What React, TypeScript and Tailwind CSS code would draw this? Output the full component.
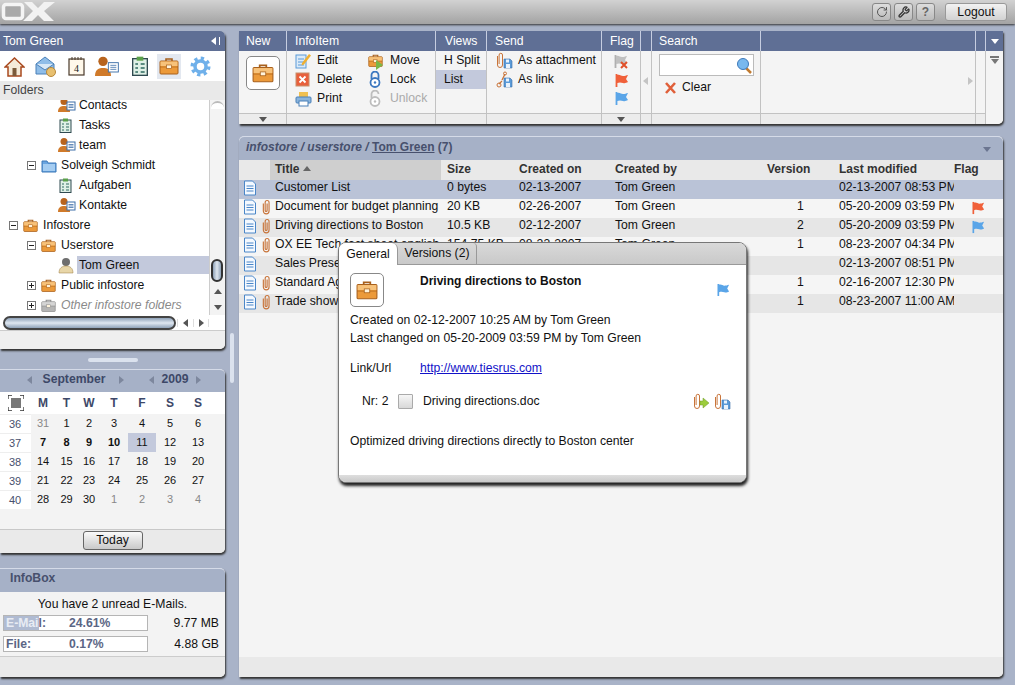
import type { ReactNode } from 'react';
import { RotateCw, Wrench } from 'lucide-react';

const Briefcase = ({ size = 16, grey = false }: { size?: number; grey?: boolean }) => {
  const dark = grey ? '#8f8f8f' : '#a8601c';
  const main = grey ? '#b5b5b5' : '#ec9a3a';
  const light = grey ? '#d5d5d5' : '#f7c27a';
  return (
    <svg width={size} height={size} viewBox="0 0 20 20" className="shrink-0">
      <path d="M7 5V3h6v2" fill="none" stroke={dark} strokeWidth="1.6" />
      <rect x="1" y="5" width="18" height="13" rx="1" fill={main} stroke={dark} />
      <rect x="1.5" y="5.5" width="17" height="4.5" fill={light} />
      <rect x="1" y="10.5" width="18" height="1" fill={dark} opacity=".6" />
      <rect x="7.5" y="9" width="5" height="3.5" fill="#fff4dd" stroke={dark} strokeWidth=".7" />
    </svg>
  );
};

const Contact = () => (
  <svg width="18" height="16" viewBox="0 0 18 16" className="shrink-0">
    <circle cx="6" cy="4.5" r="3.5" fill="#b8641e" />
    <path d="M0 15c0-5 3-6 6-6s6 1 6 6z" fill="#d07a2a" />
    <rect x="9" y="5" width="8" height="8" fill="#fff" stroke="#3d6fa8" />
    <path d="M10.5 7.5h5M10.5 9h5M10.5 10.5h5" stroke="#3d6fa8" strokeWidth=".8" />
  </svg>
);

const TaskIcon = ({ size = 15 }: { size?: number }) => (
  <svg width={size} height={size} viewBox="0 0 15 15" className="shrink-0">
    <rect x="2" y="2" width="11" height="12.5" fill="#dff0e6" stroke="#2f4a50" />
    <rect x="5" y="0.5" width="5" height="3" fill="#5aa04a" />
    <path d="M4 6h2M4 9h2M4 12h2M8 6h3M8 9h3M8 12h3" stroke="#2f6a60" />
  </svg>
);

const Folder = () => (
  <svg width="16" height="15" viewBox="0 0 16 15" className="shrink-0">
    <path d="M1 3h5l1 2h8v9H1z" fill="#6aa5e0" stroke="#3d78b8" />
    <rect x="2" y="6" width="12" height="7" fill="#a5cdf2" />
  </svg>
);

const Doc = () => (
  <svg width="14" height="16" viewBox="0 0 14 16" className="shrink-0">
    <path d="M1.5 1h8l3 3v11h-11z" fill="#f4f9ff" stroke="#4a86c8" />
    <path d="M3.5 6h7M3.5 8.500h7M3.500 11h7" stroke="#4a86c8" />
  </svg>
);

const Clip = ({ size = 16 }: { size?: number }) => (
  <svg width={size * 0.65} height={size} viewBox="0 0 9 14" className="shrink-0">
    <path
      d="M2 4v6.500a2.500 2.500 0 0 0 5 0V3a1.700 1.700 0 0 0-3.400 0v7a.8.8 0 0 0 1.700 0V4"
      fill="none"
      stroke="#c8743a"
      strokeWidth="1"
    />
  </svg>
);

const Flag = ({ color, size = 15 }: { color: string; size?: number }) => (
  <svg width={size} height={size} viewBox="0 0 15 15" className="shrink-0">
    <path d="M2.500 1v13" stroke={color} strokeWidth="1.800" />
    <path d="M3 2c3-1 4 1 6 1s3-.5 5-1l-2 4 2 3c-2 1-3 1.500-5 1s-3-1-6 0z" fill={color} />
  </svg>
);

const FlagX = () => (
  <svg width="16" height="15" viewBox="0 0 16 15" className="shrink-0">
    <path d="M2.500 1v13" stroke="#b0b0b0" strokeWidth="1.800" />
    <path d="M3 2c3-1 4 1 6 1s3-.5 5-1l-2 4 2 3c-2 1-3 1.500-5 1s-3-1-6 0z" fill="#c0c0c0" />
    <path d="M8 8l6 6M14 8l-6 6" stroke="#e0502a" strokeWidth="2" />
  </svg>
);

const ClipSave = ({ link = false }: { link?: boolean }) => (
  <svg width="17" height="17" viewBox="0 0 17 17" className="shrink-0">
    {link ? (
      <>
        <path d="M3 13l3-3M6 9l3-6" stroke="#c8743a" strokeWidth="1.300" />
        <circle cx="3" cy="14" r="2" fill="none" stroke="#c8743a" />
        <circle cx="9" cy="2.500" r="1.500" fill="none" stroke="#c8743a" />
      </>
    ) : (
      <path d="M1.500 4v9a2.500 2.500 0 0 0 5 0V3a1.700 1.700 0 0 0-3.400 0v9" fill="none" stroke="#c8743a" />
    )}
    <path d="M8 7h6l2 2v7H8z" fill="#5a9ad8" stroke="#3d6fa8" strokeWidth=".6" />
    <rect x="10" y="7.500" width="3" height="3" fill="#e8f2fc" />
    <rect x="10" y="12" width="4" height="4" fill="#e8f2fc" />
  </svg>
);

const ClipMove = () => (
  <svg width="17" height="17" viewBox="0 0 17 17" className="shrink-0">
    <path d="M1.500 4v9a2.500 2.500 0 0 0 5 0V3a1.700 1.700 0 0 0-3.400 0v9" fill="none" stroke="#c8743a" />
    <path d="M10 5v3H7v4h3v3l6-5z" fill="#9ccc3c" stroke="#6f9a2a" strokeWidth=".5" />
  </svg>
);

const Lock = ({ open = false }: { open?: boolean }) => {
  const c = open ? '#bdbdbd' : '#3d78c0';
  return (
    <svg width="14" height="17" viewBox="0 0 14 17" className="shrink-0">
      <path d={open ? 'M3.500 8V4a3.500 3.500 0 0 1 7 0' : 'M3.500 8V4a3.500 3.500 0 0 1 7 0v4'} fill="none" stroke={c} strokeWidth="1.800" />
      <circle cx="7" cy="11.500" r="4.500" fill="#fff" stroke={c} strokeWidth="1.800" />
      <circle cx="7" cy="11.500" r="1.200" fill={c} />
    </svg>
  );
};

const Caret = ({ dir, color }: { dir: 'l' | 'r' | 'd' | 'u'; color: string }) => {
  const d = { l: 'M6 0v8L1 4z', r: 'M2 0v8l5-4z', d: 'M0 2h8L4 7z', u: 'M0 6h8L4 1z' }[dir];
  return (
    <svg width="8" height="8" viewBox="0 0 8 8" className="shrink-0">
      <path d={d} fill={color} />
    </svg>
  );
};

const OxLogo = () => (
  <svg width="58" height="22" viewBox="0 0 58 22">
    <rect x="3.500" y="3.500" width="19" height="14" rx="2.500" fill="#a9a9a9" stroke="#f4f4f4" strokeWidth="3.500" />
    <path d="M24 1h8l6 6 6-6h11l-11 9 10 10H44l-6-6-6 6H23l10-10z" fill="#f2f2f2" />
  </svg>
);

const ModuleIcons = () => (
  <div className="flex h-[30px] items-center bg-white pl-[4px]">
    <div className="flex w-[31px] justify-start">
      <svg width="21" height="21" viewBox="0 0 21 21">
        <path d="M10.500 2L1 11h3v9h13v-9h3z" fill="#f4ead8" stroke="#a8481e" strokeWidth="1.500" />
        <rect x="8.500" y="12" width="4" height="8" fill="#7a5a3a" />
      </svg>
    </div>
    <div className="flex w-[33px] justify-start">
      <svg width="22" height="21" viewBox="0 0 22 21">
        <path d="M1 8l9-7 9 7v10H1z" fill="#8fbde8" stroke="#4a80b8" />
        <path d="M1 8l9 6 9-6" fill="#d8e8f6" stroke="#4a80b8" />
        <circle cx="16" cy="16" r="4.500" fill="#e8c070" stroke="#b8883a" />
      </svg>
    </div>
    <div className="flex w-[27px] justify-start">
      <svg width="17" height="20" viewBox="0 0 17 20">
        <rect x="1" y="3" width="15" height="16" fill="#fff8ea" stroke="#4a3a2a" strokeWidth="1.200" />
        <path d="M4 1v3M7 1v3M10 1v3M13 1v3" stroke="#4a3a2a" />
        <text x="8.500" y="15.500" fontSize="10" textAnchor="middle" fill="#222" fontFamily="Liberation Serif">4</text>
      </svg>
    </div>
    <div className="flex w-[35px] justify-start">
      <svg width="24" height="20" viewBox="0 0 18 15">
        <circle cx="6" cy="4" r="3.500" fill="#b8641e" />
        <path d="M0 15c0-5 3-6 6-6s6 1 6 6z" fill="#d07a2a" />
        <rect x="10" y="5" width="7.500" height="7" fill="#fff" stroke="#3d6fa8" strokeWidth=".7" />
        <path d="M11.500 7h4.500M11.500 8.500h4.500M11.500 10h4.500" stroke="#3d6fa8" strokeWidth=".6" />
      </svg>
    </div>
    <div className="flex w-[27px] justify-start">
      <TaskIcon size={20} />
    </div>
    <div className="flex h-[25px] w-[24px] items-center justify-center bg-[#e3e8f0]">
      <Briefcase size={20} />
    </div>
    <div className="ml-[9px]">
      <svg width="21" height="21" viewBox="0 0 21 21">
        <circle cx="10.500" cy="10.500" r="8" fill="none" stroke="#6fb0ea" strokeWidth="4" strokeDasharray="3.140 3.140" />
        <circle cx="10.500" cy="10.500" r="5.500" fill="none" stroke="#6fb0ea" strokeWidth="3.500" />
      </svg>
    </div>
  </div>
);

type TreeRow = { label: string; depth: number; toggle?: '+' | '-'; icon: ReactNode; selected?: boolean; muted?: boolean };

const tree: TreeRow[] = [
  { label: 'Contacts', depth: 2, icon: <Contact /> },
  { label: 'Tasks', depth: 2, icon: <TaskIcon /> },
  { label: 'team', depth: 2, icon: <Contact /> },
  { label: 'Solveigh Schmidt', depth: 1, toggle: '-', icon: <Folder /> },
  { label: 'Aufgaben', depth: 2, icon: <TaskIcon /> },
  { label: 'Kontakte', depth: 2, icon: <Contact /> },
  { label: 'Infostore', depth: 0, toggle: '-', icon: <Briefcase size={15} /> },
  { label: 'Userstore', depth: 1, toggle: '-', icon: <Briefcase size={15} /> },
  {
    label: 'Tom Green',
    depth: 2,
    selected: true,
    icon: (
      <svg width="16" height="17" viewBox="0 0 16 17" className="shrink-0">
        <circle cx="8" cy="5" r="4" fill="#6e6e6e" />
        <path d="M1 16c0-5 3-7 7-7s7 2 7 7z" fill="#e8d6a8" stroke="#9a7a40" strokeWidth=".5" />
      </svg>
    ),
  },
  { label: 'Public infostore', depth: 1, toggle: '+', icon: <Briefcase size={15} /> },
  { label: 'Other infostore folders', depth: 1, toggle: '+', muted: true, icon: <Briefcase size={15} grey /> },
];

const Toggle = ({ sign }: { sign: '+' | '-' }) => (
  <div className="relative h-[9px] w-[9px] shrink-0 border border-[#777] bg-white">
    <div className="absolute left-[1px] top-[3px] h-[1px] w-[5px] bg-[#222]" />
    {sign === '+' && <div className="absolute left-[3px] top-[1px] h-[5px] w-[1px] bg-[#222]" />}
  </div>
);

const FolderTree = () => (
  <div className="-mt-[5px]">
    {tree.map((r) => {
      const pad = ['pl-[9px]', 'pl-[27px]', 'pl-[58px]'][r.depth];
      return (
        <div key={r.label} className={`flex h-[20px] items-center ${pad}`}>
          {r.toggle && (
            <div className="w-[14px]">
              <Toggle sign={r.toggle} />
            </div>
          )}
          <div className={`flex items-center justify-start ${r.depth === 2 ? 'w-[18px]' : 'w-[20px]'}`}>{r.icon}</div>
          <div
            className={`flex h-[18px] flex-1 items-center whitespace-nowrap text-[12.2px] ${r.selected ? 'ml-[1px] bg-[#c3c9dc] pl-[2px]' : ''} ${
              r.depth === 2 && !r.selected ? 'pl-[3px]' : ''
            } ${r.muted ? 'italic text-[#8a8a8a]' : 'text-[#111]'}`}
          >
            {r.label}
          </div>
        </div>
      );
    })}
  </div>
);

const FoldersPanel = () => (
  <div className="flex h-[318px] flex-col overflow-hidden rounded-r-[5px] bg-[#efefef] shadow-[1px_2px_2px_#333]">
    <div className="flex h-[20px] items-center justify-between bg-[#5f6f95] pl-[3px] pr-[5px] text-[12.2px] text-white">
      <span>Tom Green</span>
      <div className="flex items-center gap-[1px]">
        <Caret dir="l" color="#fff" />
        <div className="h-[8px] w-[1px] bg-white" />
      </div>
    </div>
    <ModuleIcons />
    <div className="flex h-[19px] items-center bg-[#e9e9e9] pl-[3px] text-[12.2px] text-[#444]">Folders</div>
    <div className="flex h-[215px] overflow-hidden bg-white">
      <div className="w-[209px] shrink-0 overflow-hidden">
        <FolderTree />
      </div>
      <div className="relative flex-1 border-l border-[#ccc] bg-[#f3f3f3]">
        <div className="mx-[1px] mt-[1px] h-[8px] rounded-t-[8px] border-t-2 border-[#bbb] bg-white" />
        <div className="absolute left-[1px] top-[159px] h-[23px] w-[12px] rounded-[6px] border-2 border-[#333] bg-gradient-to-r from-[#8fa2b8] via-[#dfe7f0] to-[#8fa2b8]" />
        <div className="absolute left-0 top-[184px] flex h-[31px] w-full flex-col items-center justify-around">
          <Caret dir="u" color="#555" />
          <Caret dir="d" color="#555" />
        </div>
      </div>
    </div>
    <div className="flex h-[16px] items-center border-b border-[#ccc] bg-white">
      <div className="ml-[3px] h-[14px] w-[173px] rounded-[7px] border-2 border-[#444] bg-gradient-to-b from-[#8fa2b8] via-[#dfe7f0] to-[#8fa2b8]" />
      <div className="ml-[1px] flex w-[16px] justify-center border-l border-[#ddd]">
        <Caret dir="l" color="#555" />
      </div>
      <div className="flex w-[16px] justify-center border-x border-[#ddd]">
        <Caret dir="r" color="#555" />
      </div>
    </div>
    <div className="flex-1 bg-[#efefef]" />
  </div>
);

const weekdays = ['M', 'T', 'W', 'T', 'F', 'S', 'S'];
const weeks = [
  { n: 36, days: [31, 1, 2, 3, 4, 5, 6] },
  { n: 37, days: [7, 8, 9, 10, 11, 12, 13] },
  { n: 38, days: [14, 15, 16, 17, 18, 19, 20] },
  { n: 39, days: [21, 22, 23, 24, 25, 26, 27] },
  { n: 40, days: [28, 29, 30, 1, 2, 3, 4] },
];

const CalendarPanel = () => (
  <div className="flex h-[184px] flex-col overflow-hidden rounded-r-[5px] border-t border-[#d5dbe8] bg-[#f3f3f3] shadow-[1px_2px_2px_#333]">
    <div className="flex h-[22px] items-center bg-[#a6b1c7] pb-[3px] text-[12.2px] font-bold text-[#3d4868]">
      <div className="ml-[26px] w-[9px]">
        <Caret dir="l" color="#7d879d" />
      </div>
      <div className="w-[78px] text-center">September</div>
      <div className="w-[35px] pl-[4px]">
        <Caret dir="r" color="#7d879d" />
      </div>
      <Caret dir="l" color="#7d879d" />
      <div className="w-[38px] text-center">2009</div>
      <Caret dir="r" color="#7d879d" />
    </div>
    <div className="grid grid-cols-[31px_24px_23px_22px_28px_28px_28px_28px_13px] grid-rows-[22px_19px_19px_19px_19px_19px] text-[11px] leading-[19px]">
      <div className="flex items-center justify-center bg-white">
        <svg width="16" height="16" viewBox="0 0 16 16">
          <rect x="3" y="3" width="10" height="10" fill="#777" />
          <path d="M0 4V0h4M12 0h4v4M16 12v4h-4M4 16H0v-4" fill="none" stroke="#333" strokeWidth="1.300" />
        </svg>
      </div>
      {weekdays.map((d, i) => (
        <div key={i} className="bg-white text-center text-[12px] font-bold leading-[22px] text-[#3d4868]">
          {d}
        </div>
      ))}
      <div className="bg-white" />
      {weeks.map((w, wi) => (
        <div key={w.n} className="contents">
          <div className="border-t border-[#eee] bg-white pr-[1px] text-center text-[#47506d]">{w.n}</div>
          {w.days.map((d, di) => {
            const outside = (wi === 0 && di === 0) || (wi === 4 && di > 2);
            const today = d === 11;
            return (
              <div
                key={di}
                className={`text-center ${today ? 'bg-[#c3c9dc]' : ''} ${outside ? 'text-[#888]' : 'text-[#111]'} ${
                  wi === 1 && di < 4 ? 'font-bold' : ''
                }`}
              >
                {d}
              </div>
            );
          })}
          <div />
        </div>
      ))}
    </div>
    <div className="mt-[20px] flex flex-1 justify-center border-t border-[#c8c8c8] bg-[#eaeaea] pt-[1px]">
      <div className="flex h-[19px] w-[60px] items-center justify-center rounded-[3px] border border-[#666] bg-gradient-to-b from-[#fafafa] to-[#c9c9c9] text-[12.2px] text-[#111]">
        Today
      </div>
    </div>
  </div>
);

const UsageBar = ({ label, value, fill }: { label: string; value: string; fill?: string }) => (
  <div className="relative flex h-[16px] w-[145px] items-center border border-[#b5b5b5] bg-white pl-[2px] text-[12.2px] font-bold text-[#5b6685]">
    <span className="w-[63px]">{label}</span>
    <span>{value}</span>
    {fill && (
      <div className={`absolute inset-y-0 left-0 flex items-center overflow-hidden whitespace-nowrap bg-[#b0bbd2] pl-[2px] text-[#e8ecf4] ${fill}`}>
        {label}
      </div>
    )}
  </div>
);

const InfoBox = () => (
  <div className="flex h-[109px] flex-col overflow-hidden rounded-r-[5px] border-t border-[#d5dbe8] bg-[#f3f3f3] shadow-[1px_2px_2px_#333]">
    <div className="flex h-[23px] items-center bg-[#a6b1c7] pb-[4px] pl-[10px] text-[12.2px] font-bold text-[#47506d]">InfoBox</div>
    <div className="pt-[5px] text-center text-[12.2px] leading-[14px] text-[#111]">You have 2 unread E-Mails.</div>
    <div className="mt-[4px] flex h-[16px] items-center justify-between pl-[3px] pr-[6px]">
      <UsageBar label="E-Mail:" value="24.61%" fill="w-[35px]" />
      <span className="text-[12.2px] text-[#111]">9.77 MB</span>
    </div>
    <div className="mt-[5px] flex h-[16px] items-center justify-between pl-[3px] pr-[6px]">
      <UsageBar label="File:" value="0.17%" />
      <span className="text-[12.2px] text-[#111]">4.88 GB</span>
    </div>
    <div className="mt-[4px] flex-1 border-t border-[#ccc] bg-[#eaeaea]" />
  </div>
);

const ToolSection = ({
  title,
  width,
  pad = 'pl-[8px]',
  foot = false,
  children,
}: {
  title?: string;
  width: string;
  pad?: string;
  foot?: boolean;
  children?: ReactNode;
}) => (
  <div className={`flex shrink-0 flex-col border-r border-[#c2c2c2] ${width}`}>
    <div className={`-mr-[1px] flex h-[20px] items-center border-r border-[#c6cde0] bg-[#5f6f95] text-[12.2px] text-white ${pad}`}>{title}</div>
    <div className="flex-1 overflow-hidden">{children}</div>
    <div className="flex h-[11px] items-center justify-center border-t border-[#c2c2c2] bg-[#ececec]">
      {foot && <Caret dir="d" color="#555" />}
    </div>
  </div>
);

const ToolItem = ({ icon, label, muted = false }: { icon: ReactNode; label: string; muted?: boolean }) => (
  <div className="flex h-[19px] items-center">
    <div className="flex w-[22px] justify-start">{icon}</div>
    <span className={`whitespace-nowrap pb-[1px] text-[12.2px] ${muted ? 'text-[#aaa]' : 'text-[#111]'}`}>{label}</span>
  </div>
);

const Toolbar = () => (
  <div className="flex h-[93px] overflow-hidden rounded-br-[5px] bg-[#f4f4f4] shadow-[1px_2px_2px_#333]">
    <ToolSection title="New" width="w-[48px]" pad="pl-[7px]" foot>
      <div className="ml-[7px] mt-[5px] flex h-[34px] w-[34px] items-center justify-center rounded-[5px] border border-[#888] bg-white">
        <Briefcase size={22} />
      </div>
    </ToolSection>
    <ToolSection title="InfoItem" width="w-[149px]">
      <div className="flex pl-[8px]">
        <div className="w-[73px]">
          <ToolItem
            label="Edit"
            icon={
              <svg width="16" height="16" viewBox="0 0 16 16">
                <rect x="1" y="2" width="10" height="13" fill="#dcebf8" stroke="#5a9ad8" />
                <path d="M3 6h6M3 9h6M3 12h6" stroke="#5a9ad8" />
                <path d="M7 10l7-9 2 1.500-7 9-2.500 1z" fill="#f0b030" />
              </svg>
            }
          />
          <ToolItem
            label="Delete"
            icon={
              <svg width="15" height="15" viewBox="0 0 15 15">
                <rect x="1" y="1" width="13" height="13" fill="#e8603c" stroke="#c8906c" />
                <path d="M4.500 4.500l6 6M10.500 4.500l-6 6" stroke="#fff" strokeWidth="1.800" />
              </svg>
            }
          />
          <ToolItem
            label="Print"
            icon={
              <svg width="17" height="16" viewBox="0 0 17 16">
                <rect x="4" y="1" width="9" height="6" fill="#f0c050" />
                <rect x="1" y="6" width="15" height="6" rx="1" fill="#8ab4dc" stroke="#4a80b8" />
                <rect x="4" y="10" width="9" height="5" fill="#fff" stroke="#4a80b8" />
              </svg>
            }
          />
        </div>
        <div>
          <ToolItem
            label="Move"
            icon={
              <div className="relative">
                <Briefcase size={15} />
                <div className="absolute -bottom-[2px] left-[8px] h-0 w-0 border-y-[5px] border-l-[7px] border-y-transparent border-l-[#7ab648]" />
              </div>
            }
          />
          <ToolItem label="Lock" icon={<Lock />} />
          <ToolItem label="Unlock" muted icon={<Lock open />} />
        </div>
      </div>
    </ToolSection>
    <ToolSection title="Views" width="w-[51px]" pad="pl-[9px]">
      <div className="flex h-[19px] items-center pb-[1px] pl-[8px] text-[12.2px] text-[#111]">H Split</div>
      <div className="flex h-[19px] items-center bg-[#c3c9dc] pb-[1px] pl-[8px] text-[12.2px] text-[#111]">List</div>
    </ToolSection>
    <ToolSection title="Send" width="w-[115px]">
      <div className="pl-[9px]">
        <ToolItem label="As attachment" icon={<ClipSave />} />
        <ToolItem label="As link" icon={<ClipSave link />} />
      </div>
    </ToolSection>
    <ToolSection title="Flag" width="w-[39px]" foot>
      <div className="flex flex-col items-center pt-[1px]">
        <div className="flex h-[19px] items-center"><FlagX /></div>
        <div className="flex h-[18px] items-center"><Flag color="#f0603a" /></div>
        <div className="flex h-[19px] items-center"><Flag color="#5aa5e8" /></div>
      </div>
    </ToolSection>
    <ToolSection width="w-[11px]">
      <div className="flex h-full items-center justify-center pb-[2px]">
        <Caret dir="l" color="#c4c4c4" />
      </div>
    </ToolSection>
    <ToolSection title="Search" width="w-[109px]" pad="pl-[7px]">
      <div className="pl-[7px] pt-[3px]">
        <div className="flex h-[22px] w-[95px] items-center justify-end border border-[#bbb] bg-white pr-[1px]">
          <svg width="16" height="17" viewBox="0 0 16 17">
            <path d="M10 11l5 5" stroke="#c07a30" strokeWidth="2.500" />
            <circle cx="7" cy="7" r="5.500" fill="#78b8ee" stroke="#3d78b8" />
          </svg>
        </div>
        <div className="ml-[6px] mt-[2px] flex h-[19px] items-center">
          <svg width="17" height="12" viewBox="0 0 17 12" className="-ml-[3px] mr-[3px]">
            <path d="M4 1l9 10M13 1L4 11" stroke="#e0603a" strokeWidth="2.600" />
          </svg>
          <span className="text-[12.2px] text-[#111]">Clear</span>
        </div>
      </div>
    </ToolSection>
    <ToolSection width="w-[215px]">
      <div className="flex h-full items-center justify-end pb-[2px] pr-[1px]">
        <Caret dir="r" color="#c4c4c4" />
      </div>
    </ToolSection>
    <ToolSection width="w-[10px]" />
    <div className="flex flex-1 flex-col items-center bg-[#f4f4f4]">
      <div className="flex h-[20px] w-full items-center justify-center bg-[#5f6f95]">
        <Caret dir="d" color="#fff" />
      </div>
      <div className="mt-[5px] flex flex-col items-center">
        <div className="h-[2px] w-[9px] bg-[#777]" />
        <div className="mt-[1px] h-0 w-0 border-x-[4.500px] border-t-[5px] border-x-transparent border-t-[#777]" />
      </div>
    </div>
  </div>
);

const files = [
  { title: 'Customer List', size: '0 bytes', created: '02-13-2007', version: '', modified: '02-13-2007 08:53 PM', clip: false, flag: '', bg: 'bg-[#bac3d7]' },
  { title: 'Document for budget planning', size: '20 KB', created: '02-26-2007', version: '1', modified: '05-20-2009 03:59 PM', clip: true, flag: '#f0603a', bg: 'bg-[#f5f5f5]' },
  { title: 'Driving directions to Boston', size: '10.5 KB', created: '02-12-2007', version: '2', modified: '05-20-2009 03:59 PM', clip: true, flag: '#5aa5e8', bg: 'bg-[#e6e6e6]' },
  { title: 'OX EE Tech fact sheet english', size: '154.75 KB', created: '08-23-2007', version: '1', modified: '08-23-2007 04:34 PM', clip: true, flag: '', bg: 'bg-[#f5f5f5]' },
  { title: 'Sales Presentation', size: '0 bytes', created: '02-13-2007', version: '', modified: '02-13-2007 08:51 PM', clip: false, flag: '', bg: 'bg-[#e6e6e6]' },
  { title: 'Standard Agreement', size: '25 KB', created: '02-16-2007', version: '1', modified: '02-16-2007 12:30 PM', clip: true, flag: '', bg: 'bg-[#f5f5f5]' },
  { title: 'Trade show', size: '30 KB', created: '08-23-2007', version: '1', modified: '08-23-2007 11:00 AM', clip: true, flag: '', bg: 'bg-[#e6e6e6]' },
];

const FileTable = () => (
  <div className="text-[12.2px] text-[#111]">
    <div className="flex h-[20px] items-center bg-[#e9e9e9] text-[12px] font-bold text-[#333]">
      <div className="h-full w-[31px] shrink-0" />
      <div className="flex h-full w-[171px] shrink-0 items-center gap-[4px] bg-[#cfcfcf] pb-[3px] pl-[5px]">
        Title
        <Caret dir="u" color="#666" />
      </div>
      <div className="w-[78px] shrink-0 pb-[3px] pl-[6px]">Size</div>
      <div className="w-[96px] shrink-0 pb-[3px]">Created on</div>
      <div className="w-[128px] shrink-0 pb-[3px]">Created by</div>
      <div className="w-[96px] shrink-0 pb-[3px] pl-[24px]">Version</div>
      <div className="w-[115px] shrink-0 pb-[3px]">Last modified</div>
      <div className="pb-[3px]">Flag</div>
    </div>
    {files.map((f) => (
      <div key={f.title} className={`flex h-[19px] items-center pb-[4px] ${f.bg}`}>
        <div className="flex w-[31px] shrink-0 items-center pl-[4px]">
          <div className="w-[18px] shrink-0">
            <Doc />
          </div>
          {f.clip && <Clip />}
        </div>
        <div className="w-[171px] shrink-0 overflow-hidden whitespace-nowrap pl-[5px]">{f.title}</div>
        <div className="w-[78px] shrink-0 pl-[6px]">{f.size}</div>
        <div className="w-[96px] shrink-0">{f.created}</div>
        <div className="w-[128px] shrink-0">Tom Green</div>
        <div className="w-[96px] shrink-0 pl-[54px]">{f.version}</div>
        <div className="w-[115px] shrink-0 overflow-hidden whitespace-nowrap">{f.modified}</div>
        {f.flag && (
          <div className="pl-[17px] pt-[3px]">
            <Flag color={f.flag} size={14} />
          </div>
        )}
      </div>
    ))}
  </div>
);

const ItemPopup = () => (
  <div className="absolute left-[99px] top-[105px] flex h-[241px] w-[409px] flex-col overflow-hidden rounded-[8px] border border-[#777] bg-white text-[12.2px] text-[#111] shadow-[1px_3px_3px_#222]">
    <div className="flex h-[22px] shrink-0 border-b border-[#999] bg-gradient-to-b from-[#d9d9d9] to-[#c9c9c9]">
      <div className="-mb-[1px] flex w-[59px] items-center justify-center rounded-tr-[6px] border-r border-[#999] bg-white">General</div>
      <div className="flex w-[79px] items-center justify-center rounded-tr-[4px] border-r border-[#999]">Versions (2)</div>
    </div>
    <div className="flex-1 px-[11px]">
      <div className="flex h-[46px] pt-[8px]">
        <div className="flex h-[34px] w-[34px] items-center justify-center rounded-[5px] border border-[#888] bg-white">
          <Briefcase size={22} />
        </div>
        <div className="ml-[36px] flex-1 pt-[1px] text-[12px] font-bold leading-[14px]">Driving directions to Boston</div>
        <div className="mr-[5px] mt-[10px]">
          <Flag color="#5aa5e8" size={14} />
        </div>
      </div>
      <div className="leading-[18px]">Created on 02-12-2007 10:25 AM by Tom Green</div>
      <div className="leading-[18px]">Last changed on 05-20-2009 03:59 PM by Tom Green</div>
      <div className="mt-[12px] flex leading-[18px]">
        <div className="w-[70px]">Link/Url</div>
        <a className="text-[#1212c8] underline">http://www.tiesrus.com</a>
      </div>
      <div className="mt-[15px] flex h-[18px] items-center">
        <div className="w-[37px] whitespace-nowrap pl-[12px]">Nr: 2</div>
        <div className="ml-[11px] h-[15px] w-[15px] rounded-[1px] border border-[#aaa] bg-gradient-to-b from-[#f6f6f6] to-[#d8d8d8]" />
        <div className="ml-[10px] flex-1">Driving directions.doc</div>
        <div className="mr-[4px] flex gap-[4px]">
          <ClipMove />
          <ClipSave />
        </div>
      </div>
      <div className="mt-[22px] leading-[18px]">Optimized driving directions directly to Boston center</div>
    </div>
    <div className="h-[7px] shrink-0 bg-gradient-to-b from-[#dedede] to-[#c9c9c9]" />
  </div>
);

const MainPanel = () => (
  <div className="relative mt-[12px] flex h-[541px] flex-col rounded-r-[5px] rounded-tl-[5px] border-t border-[#d5dbe8] bg-[#f4f4f4] shadow-[1px_2px_2px_#333]">
    <div className="flex h-[23px] shrink-0 items-center justify-between rounded-t-[5px] bg-[#a6b1c7] pl-[7px] pr-[12px] text-[12px] font-bold text-[#47506d]">
      <div className="pb-[4px]">
        <span className="italic">infostore / userstore / </span>
        <span className="underline">Tom Green</span> (7)
      </div>
      <Caret dir="d" color="#6b7590" />
    </div>
    <FileTable />
    <div className="flex-1" />
    <div className="h-[20px] shrink-0 rounded-br-[5px] bg-[#e9e9e9]" />
    <ItemPopup />
  </div>
);

export default function App() {
  return (
    <div className="flex h-[685px] w-[1015px] flex-col overflow-hidden bg-[#a9b3c8] font-['Liberation_Sans',Arial,sans-serif]">
      <div className="flex h-[24px] shrink-0 items-center justify-between bg-gradient-to-b from-[#d2d2d2] to-[#a3a3a3] pr-[8px] shadow-[0_1px_2px_#333]">
        <OxLogo />
        <div className="flex items-center">
          <div className="flex gap-[3px]">
            {[
              <RotateCw key="r" size={12} strokeWidth={2} className="text-[#555]" />,
              <Wrench key="w" size={12} strokeWidth={2.500} className="text-[#333]" />,
              <span key="h" className="text-[12px] font-bold text-[#666]">?</span>,
            ].map((icon, i) => (
              <div key={i} className="flex h-[18px] w-[19px] items-center justify-center rounded-[3px] border border-[#888] bg-gradient-to-b from-[#ddd] to-[#bbb]">
                {icon}
              </div>
            ))}
          </div>
          <div className="ml-[10px] flex h-[18px] w-[62px] items-center justify-center rounded-[3px] border border-[#999] bg-gradient-to-b from-[#f2f2f2] to-[#d2d2d2] text-[12.2px] text-[#111]">
            Logout
          </div>
        </div>
      </div>
      <div className="flex flex-1 pt-[7px]">
        <div className="flex w-[225px] shrink-0 flex-col">
          <FoldersPanel />
          <div className="flex h-[20px] items-start justify-center pt-[9px]">
            <div className="h-[4px] w-[50px] rounded-[2px] bg-[#dbe2ee]" />
          </div>
          <CalendarPanel />
          <div className="h-[15px]" />
          <InfoBox />
        </div>
        <div className="flex w-[14px] shrink-0 items-start justify-center pt-[302px]">
          <div className="h-[50px] w-[4px] rounded-[2px] bg-[#dbe2ee]" />
        </div>
        <div className="w-[764px] shrink-0">
          <Toolbar />
          <MainPanel />
        </div>
      </div>
    </div>
  );
}
